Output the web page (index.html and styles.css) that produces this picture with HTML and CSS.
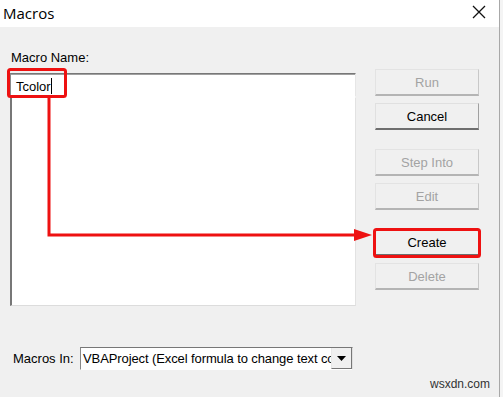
FILE: index.html
```html
<!DOCTYPE html>
<html lang="en">
<head>
  <meta charset="UTF-8">
  <title>Macros</title>
  <link rel="stylesheet" href="styles.css">
</head>
<body>

  <div class="dialog">
    <div class="titlebar">
      <span class="title">Macros</span>
      <svg class="close" width="14" height="14" viewBox="0 0 14 14">
        <path d="M1 1 L13 13 M13 1 L1 13" stroke="#111" stroke-width="1.3" fill="none"/>
      </svg>
    </div>

    <div class="content">
      <div class="main">
        <div class="left">
          <div class="label">Macro Name:</div>
          <div class="name-input">Tcolor<span class="caret"></span></div>
          <div class="list"></div>
        </div>

        <div class="buttons">
          <button class="btn" disabled>Run</button>
          <button class="btn">Cancel</button>
          <button class="btn gap" disabled>Step Into</button>
          <button class="btn" disabled>Edit</button>
          <button class="btn gap">Create</button>
          <button class="btn" disabled>Delete</button>
        </div>
      </div>

      <div class="footer">
        <span class="footer-label">Macros In:</span>
        <div class="select">
          <span class="select-text">VBAProject (Excel formula to change text color)</span>
          <span class="select-arrow">
            <svg width="9" height="5" viewBox="0 0 9 5"><path d="M0 0 H9 L4.5 5 Z" fill="#000"/></svg>
          </span>
        </div>
      </div>

      <div class="watermark">wsxdn.com</div>
    </div>

    <!-- red annotation drawn over the dialog -->
    <svg class="annot" width="500" height="397" viewBox="0 0 500 397">
      <rect x="8.5" y="69.5" width="57" height="27" rx="2" fill="none" stroke="#ee1111" stroke-width="3"/>
      <path d="M49 97 V235 H356" fill="none" stroke="#ee1111" stroke-width="3"/>
      <path d="M354 229 L372 235 L354 241 Z" fill="#ee1111"/>
      <rect x="374.5" y="229.5" width="105" height="27" rx="2" fill="none" stroke="#ee1111" stroke-width="3"/>
    </svg>
  </div>

</body>
</html>
```

FILE: styles.css
```css
body {
  margin: 0;
  background-color: #f4f4f4;
  font-family: 'Liberation Sans', Arial, sans-serif;
  font-size: 13px;
  color: #000;
}
.dialog {
  position: relative;
  width: 499px;
  height: 397px;
  border-right: 1px solid #a8a8a8;
  background-color: #f0f0f0;
}
.titlebar {
  height: 27px;
  background-color: #fff;
  display: flex;
  align-items: center;
  justify-content: space-between;
  padding: 0 13px 0 3px;
}
.title {
  font-family: 'Open Sans', sans-serif;
  font-size: 15px;
  margin-top: -2px;
}
.close {
  margin-top: -3px;
}
.content {
  padding: 23px 0 0 10px;
}
.main {
  display: flex;
  gap: 19px;
}
.left {
  width: 346px;
}
.label {
  line-height: 16px;
  margin: 0 0 7px 1px;
}
.name-input {
  height: 24px;
  box-sizing: border-box;
  background-color: #fff;
  border: 1px solid;
  border-color: #777 #e6e6e6 #fff #8a8a8a;
  box-shadow: inset 0 1px 0 #a0a0a0;
  padding: 4px 0 0 5px;
  line-height: 17px;
}
.caret {
  display: inline-block;
  width: 1px;
  height: 16px;
  background-color: #000;
  vertical-align: -3px;
}
.list {
  height: 209px;
  box-sizing: border-box;
  background-color: #fff;
  border: 1px solid;
  border-color: #fff #e2e2e2 #dcdcdc #777;
  border-left-width: 2px;
}
.buttons {
  display: flex;
  flex-direction: column;
  gap: 7px;
  padding-top: 19px;
}
.btn {
  width: 104px;
  height: 27px;
  font-family: inherit;
  font-size: 13px;
  color: #000;
  background-color: #f0f0f0;
  border: 1px solid;
  border-color: #e0e0e0 #a0a0a0 #6e6e6e #e0e0e0;
  border-bottom-width: 2px;
  padding: 0;
}
.btn:disabled {
  color: #a3a3a3;
  border-color: #e3e3e3 #c8c8c8 #b4b4b4 #e3e3e3;
}
.btn.gap {
  margin-top: 12px;
}
.footer {
  display: flex;
  align-items: center;
  margin-top: 41px;
  padding-left: 3px;
}
.footer-label {
  width: 67px;
}
.select {
  width: 273px;
  height: 23px;
  box-sizing: border-box;
  display: flex;
  background-color: #fff;
  border: 1px solid;
  border-color: #777 #e0e0e0 #fff #888;
}
.select-text {
  flex: 1;
  overflow: hidden;
  white-space: nowrap;
  letter-spacing: -0.1px;
  padding: 3px 0 0 2px;
}
.select-arrow {
  width: 19px;
  display: flex;
  align-items: center;
  justify-content: center;
  background-color: #f0f0f0;
  border-left: 1px solid #e8e8e8;
  border-right: 1px solid #777;
  border-bottom: 1px solid #777;
}
.watermark {
  text-align: right;
  padding-right: 9px;
  margin-top: 7px;
  font-size: 12px;
  color: #333;
}
.annot {
  position: absolute;
  top: 0;
  left: 0;
  pointer-events: none;
}
```
